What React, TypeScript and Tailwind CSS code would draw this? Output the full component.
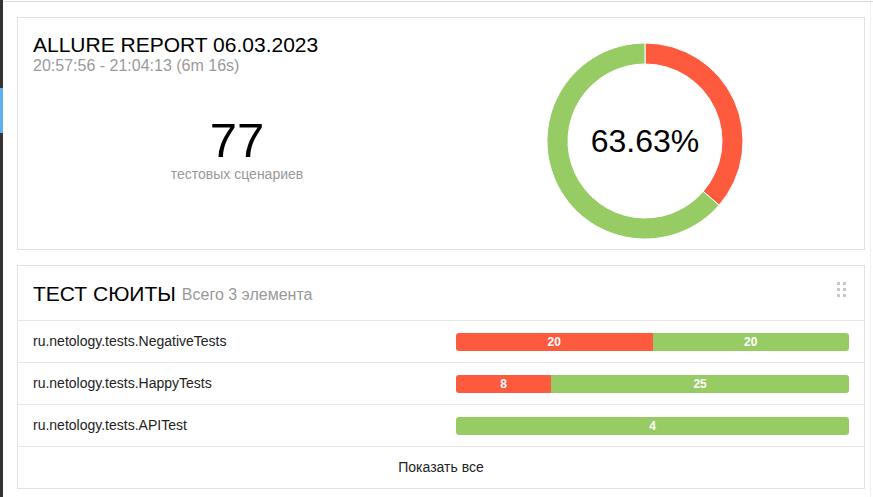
import React from "react";

const RED = "#fd5a3e";
const GREEN = "#97cc64";

function arcPath(cx: number, cy: number, r0: number, r1: number, a0: number, a1: number) {
  const p = (r: number, a: number) => {
    const rad = (a - 90) * (Math.PI / 180);
    return [cx + r * Math.cos(rad), cy + r * Math.sin(rad)];
  };
  const large = a1 - a0 > 180 ? 1 : 0;
  const [x1, y1] = p(r1, a0);
  const [x2, y2] = p(r1, a1);
  const [x3, y3] = p(r0, a1);
  const [x4, y4] = p(r0, a0);
  return `M${x1} ${y1} A${r1} ${r1} 0 ${large} 1 ${x2} ${y2} L${x3} ${y3} A${r0} ${r0} 0 ${large} 0 ${x4} ${y4} Z`;
}

function Donut() {
  const failedAngle = (28 / 77) * 360;
  return (
    <div className="relative w-[196px] h-[196px]">
      <svg width="196" height="196" viewBox="0 0 196 196">
        <path d={arcPath(98, 98, 77, 98, 0, failedAngle)} fill={RED} stroke="#fff" strokeWidth="1" />
        <path d={arcPath(98, 98, 77, 98, failedAngle, 359.99)} fill={GREEN} stroke="#fff" strokeWidth="1" />
      </svg>
      <div className="absolute inset-0 flex items-center justify-center text-[32px] text-black">63.63%</div>
    </div>
  );
}

const suites = [
  { name: "ru.netology.tests.NegativeTests", failed: 20, passed: 20 },
  { name: "ru.netology.tests.HappyTests", failed: 8, passed: 25 },
  { name: "ru.netology.tests.APITest", failed: 0, passed: 4 },
];

function Bar({ failed, passed }: { failed: number; passed: number }) {
  const total = failed + passed;
  return (
    <div className="flex w-[393px] h-[18px] rounded-[3px] overflow-hidden text-[12px] font-bold text-white leading-[18px]">
      {failed > 0 && (
        <div className="flex justify-center bg-[#fd5a3e]" style={{ width: `${(failed / total) * 100}%` }}>
          {failed}
        </div>
      )}
      {passed > 0 && (
        <div className="flex justify-center bg-[#97cc64]" style={{ width: `${(passed / total) * 100}%` }}>
          {passed}
        </div>
      )}
    </div>
  );
}

export default function App() {
  return (
    <div
      className="flex w-[873px] h-[497px] bg-white overflow-hidden"
      style={{ fontFamily: '"Liberation Sans", Arial, sans-serif' }}
    >
      <div className="w-[3px] h-full bg-[#333333] flex flex-col">
        <div className="mt-[88px] h-[45px] bg-[#5eaef2]" />
      </div>
      <div className="flex-1 flex flex-col">
        <div className="mt-[1px] h-[1px] bg-[#dddddd]" />
        <div className="flex flex-1">
          <div className="w-[863px] pl-[14px] pr-[1px] pt-[15px] flex flex-col gap-[15px]">
            {/* Summary card */}
            <div className="h-[233px] border border-[#e2e2e2] flex">
              <div className="w-[438px] flex flex-col">
                <div className="pl-[15px] pt-[15px]">
                  <div className="text-[21px] leading-[24px] text-black">ALLURE REPORT 06.03.2023</div>
                  <div className="text-[16px] leading-[18px] text-[#9a9a9a]">20:57:56 - 21:04:13 (6m 16s)</div>
                </div>
                <div className="flex flex-col items-center mt-[39px]">
                  <div className="text-[49px] leading-[52px] text-black">77</div>
                  <div className="text-[14px] leading-[17px] text-[#999999]">тестовых сценариев</div>
                </div>
              </div>
              <div className="flex-1 pt-[25px] pl-[91px]">
                <Donut />
              </div>
            </div>

            {/* Suites card */}
            <div className="h-[224px] border border-[#e2e2e2] flex flex-col">
              <div className="relative h-[55px] border-b border-[#e8e8e8] pl-[15px] flex items-center pt-[1px]">
                <span className="text-[21px] text-black">ТЕСТ СЮИТЫ</span>
                <span className="ml-[6px] text-[16px] text-[#999999] mt-[3px]">Всего 3 элемента</span>
                <div className="absolute right-[18px] top-[16px] grid grid-cols-2 gap-x-[3px] gap-y-[3px]">
                  {Array.from({ length: 6 }).map((_, i) => (
                    <div key={i} className="w-[3px] h-[3px] bg-[#c8c8c8]" />
                  ))}
                </div>
              </div>
              {suites.map((s) => (
                <div key={s.name} className="h-[42px] border-b border-[#e8e8e8] flex items-center px-[15px]">
                  <div className="flex-1 text-[14px] text-[#222222]">{s.name}</div>
                  <Bar failed={s.failed} passed={s.passed} />
                </div>
              ))}
              <div className="flex-1 flex items-center justify-center text-[14px] text-[#222222]">Показать все</div>
            </div>
          </div>
          <div className="w-[4px]" />
          <div className="w-[1px] bg-[#f0f0f0]" />
        </div>
      </div>
    </div>
  );
}
